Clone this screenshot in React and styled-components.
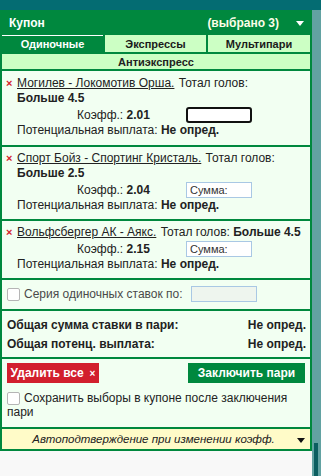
import React from "react";
import styled, { createGlobalStyle } from "styled-components";

const Global = createGlobalStyle`
  html, body { margin: 0; padding: 0; background: #f8f8f8; }
  body { font-family: "Liberation Sans", Arial, sans-serif; font-size: 12px; color: #222; }
  * { box-sizing: border-box; }
`;

const Page = styled.div`
  width: 321px;
  height: 476px;
  overflow: hidden;
  display: flex;
  flex-direction: column;
`;

const TopBar = styled.div`
  height: 10px;
  background: #046c72;
  flex: none;
`;

const Body = styled.div`
  flex: 1;
  display: flex;
  align-items: flex-start;
`;

const Coupon = styled.div`
  width: 312px;
  flex: none;
  background: #00883e;
  padding: 0 2px 2px 2px;
  display: flex;
  flex-direction: column;
  gap: 2px;
`;

const Strip = styled.div`
  align-self: stretch;
  flex: 1;
  background: #62a2a2;
  display: flex;
  flex-direction: column;
  justify-content: flex-end;
  padding-left: 2px;
`;

const Thumb = styled.div`
  width: 4px;
  height: 33px;
  background: #0b5e60;
`;

const Header = styled.div`
  height: 25px;
  display: flex;
  align-items: center;
  justify-content: space-between;
  padding: 0 6px 0 7px;
  color: #fff;
  font-weight: bold;
  font-size: 12px;
`;

const Selected = styled.span`
  display: flex;
  align-items: center;
  gap: 17px;
  color: #fdfde8;
`;

const Caret = styled.span`
  width: 0;
  height: 0;
  border-left: 4px solid transparent;
  border-right: 4px solid transparent;
  border-top: 5px solid ${(p) => p.$color || "#fff"};
  margin-top: 2px;
  justify-self: end;
`;

const Tabs = styled.div`
  display: grid;
  grid-template-columns: 101px 101px 1fr;
  gap: 2px;
  margin-top: -2px;
`;

const Tab = styled.div`
  height: 17px;
  display: flex;
  align-items: center;
  justify-content: center;
  font-weight: bold;
  font-size: 11px;
  background: ${(p) => (p.$active ? "#00883e" : "#ccffc4")};
  color: ${(p) => (p.$active ? "#fff" : "#1a1a1a")};
  border-top: 1px solid ${(p) => (p.$active ? "#fff" : "#ccffc4")};
`;

const SubBar = styled.div`
  height: 15px;
  background: #ccffc4;
  display: flex;
  align-items: center;
  justify-content: center;
  font-weight: bold;
  font-size: 11px;
`;

const Section = styled.div`
  background: #f2fff2;
  padding: ${(p) => p.$pad || "5px 4px 6px 4px"};
`;

const Line = styled.div`
  line-height: 15px;
  white-space: nowrap;
`;

const NameLine = styled(Line)`
  display: flex;
  align-items: baseline;
  gap: 4px;
`;

const Remove = styled.span`
  color: #d4202c;
  font-weight: bold;
  font-size: 11px;
  width: 7px;
`;

const Match = styled.span`
  text-decoration: underline;
  margin-right: 1px;
`;

const Indent = styled.div`
  padding-left: 11px;
`;

const OddsRow = styled.div`
  display: flex;
  align-items: center;
  height: 17px;
  padding-left: 60px;
`;

const OddsLabel = styled.span`
  width: 109px;
`;

const StakeInput = styled.input`
  width: 66px;
  height: 16px;
  padding: 0 3px;
  font-family: "Liberation Sans", Arial, sans-serif;
  font-size: 11px;
  background: #fff;
  border: ${(p) => (p.$focus ? "2px solid #111" : "1px solid #a9c8e4")};
  border-radius: ${(p) => (p.$focus ? "3px" : "0")};
  outline: none;
  &::placeholder { color: #333; }
`;

const SeriesRow = styled.div`
  display: flex;
  align-items: center;
  height: 16px;
  gap: 4px;
`;

const Box = styled.span`
  display: inline-block;
  width: 13px;
  height: 13px;
  border: 1px solid #b5b5b5;
  border-radius: 2px;
  background: #fff;
  flex: none;
  vertical-align: ${(p) => p.$va || "middle"};
`;

const SeriesInput = styled.input`
  width: 66px;
  height: 16px;
  margin-left: 4px;
  border: 1px solid #a9c8e4;
  background: #eef5ee;
  outline: none;
`;

const Gray = styled.span`
  color: #4a4a4a;
`;

const TotalRow = styled.div`
  display: flex;
  justify-content: space-between;
  font-weight: bold;
  line-height: 19px;
`;

const Buttons = styled.div`
  display: flex;
  justify-content: space-between;
  align-items: flex-start;
  padding-right: 2px;
`;

const Btn = styled.button`
  height: 20px;
  width: ${(p) => p.$w};
  border: none;
  color: #fff;
  font-weight: bold;
  font-family: "Liberation Sans", Arial, sans-serif;
  font-size: 12px;
  padding: 0;
  background: ${(p) => p.$bg};
  display: flex;
  align-items: center;
  justify-content: center;
  gap: 6px;
`;

const SmallX = styled.span`
  font-size: 10px;
`;

const SaveText = styled.div`
  margin-top: 8px;
  line-height: 14px;
  & > span:first-child { margin-right: 4px; margin-top: -2px; }
`;

const AutoBar = styled.div`
  height: 20px;
  background: #fffbc8;
  display: grid;
  grid-template-columns: 1fr auto 1fr;
  align-items: center;
  padding-right: 5px;
  font-style: italic;
  font-size: 11.5px;
  color: #222;
`;

const bets = [
  { match: "Могилев - Локомотив Орша.", total: "Больше 4.5", inline: false, odds: "2.01", focus: true, pad: "5px 4px 7px 4px" },
  { match: "Спорт Бойз - Спортинг Кристаль.", total: "Больше 2.5", inline: false, odds: "2.04", pad: "4px 4px 6px 4px" },
  { match: "Вольфсбергер АК - Аякс.", total: "Больше 4.5", inline: true, odds: "2.15", pad: "4px 4px 6px 4px" },
];

export default function App() {
  return (
    <Page>
      <Global />
      <TopBar />
      <Body>
        <Coupon>
          <Header>
            <span>Купон</span>
            <Selected>
              (выбрано 3)
              <Caret />
            </Selected>
          </Header>
          <Tabs>
            <Tab $active>Одиночные</Tab>
            <Tab>Экспрессы</Tab>
            <Tab>Мультипари</Tab>
          </Tabs>
          <SubBar>Антиэкспресс</SubBar>
          {bets.map((b) => (
            <Section key={b.match} $pad={b.pad}>
              <NameLine>
                <Remove>×</Remove>
                <span>
                  <Match>{b.match}</Match> Тотал голов:
                  {b.inline && <b> {b.total}</b>}
                </span>
              </NameLine>
              <Indent>
                {!b.inline && (
                  <Line>
                    <b>{b.total}</b>
                  </Line>
                )}
                <OddsRow>
                  <OddsLabel>
                    Коэфф.: <b>{b.odds}</b>
                  </OddsLabel>
                  {b.focus ? (
                    <StakeInput $focus />
                  ) : (
                    <StakeInput placeholder="Сумма:" />
                  )}
                </OddsRow>
                <Line>
                  Потенциальная выплата: <b>Не опред.</b>
                </Line>
              </Indent>
            </Section>
          ))}
          <Section $pad="6px 5px 7px 5px">
            <SeriesRow>
              <Box />
              <Gray>Серия одиночных ставок по:</Gray>
              <SeriesInput />
            </SeriesRow>
          </Section>
          <Section $pad="5px 4px 3px 5px">
            <TotalRow>
              <span>Общая сумма ставки в пари:</span>
              <span>Не опред.</span>
            </TotalRow>
            <TotalRow>
              <span>Общая потенц. выплата:</span>
              <span>Не опред.</span>
            </TotalRow>
          </Section>
          <Section $pad="4px 3px 8px 5px">
            <Buttons>
              <Btn $bg="#d21f2d" $w="92px">
                Удалить все <SmallX>×</SmallX>
              </Btn>
              <Btn $bg="#00883e" $w="117px">Заключить пари</Btn>
            </Buttons>
            <SaveText>
              <Box $va="-3px" />
              <span>Сохранить выборы в купоне после заключения пари</span>
            </SaveText>
          </Section>
          <AutoBar>
            <span />
            <span>Автоподтверждение при изменении коэфф.</span>
            <Caret $color="#111" />
          </AutoBar>
        </Coupon>
        <Strip>
          <Thumb />
        </Strip>
      </Body>
    </Page>
  );
}
